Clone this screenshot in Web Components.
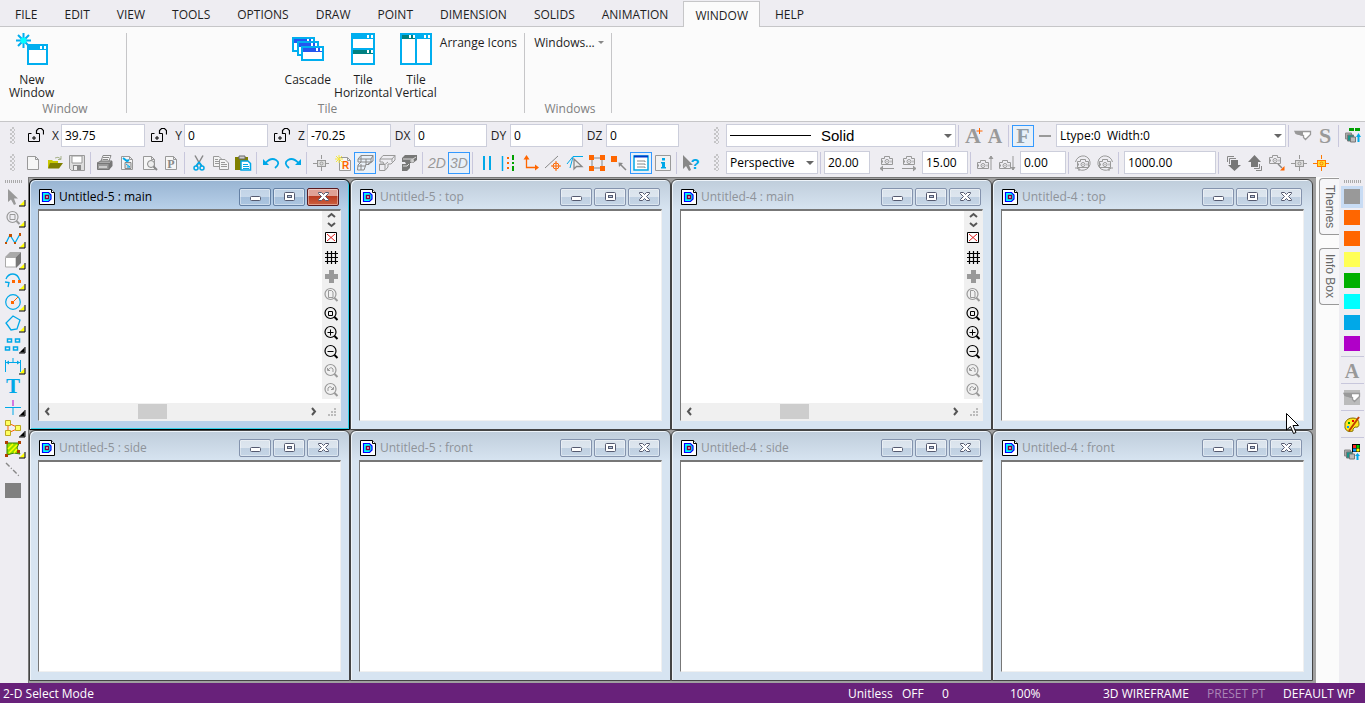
<!DOCTYPE html>
<html lang="en">
<head>
<meta charset="utf-8">
<title>Drafting workspace</title>
<style>
html, body {
    margin: 0;
    height: 100%;
}
body {
    font: 12px/16px "Open Sans", "Noto Sans", sans-serif;
    color: #1e1e1e;
    background: #eeedf2;
    overflow: hidden;
}
</style>
</head>
<body>
<app-shell>
    <menu-tabs slot="menu" items="FILE,EDIT,VIEW,TOOLS,OPTIONS,DRAW,POINT,DIMENSION,SOLIDS,ANIMATION,WINDOW,HELP" selected="WINDOW"></menu-tabs>

    <ribbon-group slot="ribbon" label="Window" style="--min: 126px">
        <ribbon-button icon="newWindow">New<br>Window</ribbon-button>
    </ribbon-group>
    <ribbon-group slot="ribbon" label="Tile" style="--min: 397px; --align: flex-end">
        <ribbon-button icon="cascade">Cascade</ribbon-button>
        <ribbon-button icon="tileH">Tile<br>Horizontal</ribbon-button>
        <ribbon-button icon="tileV">Tile<br>Vertical</ribbon-button>
        <ribbon-button>Arrange Icons</ribbon-button>
    </ribbon-group>
    <ribbon-group slot="ribbon" label="Windows" style="--min: 86px; --align: center">
        <ribbon-button drop>Windows...</ribbon-button>
    </ribbon-group>

    <tool-bar slot="bars">
        <value-field lock label="X" value="39.75"></value-field>
        <value-field lock label="Y" value="0"></value-field>
        <value-field lock label="Z" value="-70.25"></value-field>
        <value-field label="DX" value="0" style="--label: 23px; --field: 73px"></value-field>
        <value-field label="DY" value="0" style="--label: 23px; --field: 73px"></value-field>
        <value-field label="DZ" value="0" style="--label: 23px; --field: 73px"></value-field>
    </tool-bar>
    <tool-bar slot="bars">
        <pick-list line label="Line style" value="Solid" style="--field: 230px"></pick-list>
        <bar-sep></bar-sep>
        <tool-button icon="fontPlus" label="Increase text"></tool-button>
        <tool-button icon="fontA" label="Text"></tool-button>
        <bar-sep></bar-sep>
        <tool-button icon="fontF" label="Font" active></tool-button>
        <tool-button icon="dash" label="Line"></tool-button>
        <pick-list label="Line type" value="Ltype:0  Width:0" style="--field: 230px"></pick-list>
        <bar-sep></bar-sep>
        <tool-button icon="hand" label="Pick"></tool-button>
        <tool-button icon="fontS" label="Style"></tool-button>
        <bar-sep></bar-sep>
        <tool-button icon="layers" label="Layers"></tool-button>
    </tool-bar>
    <tool-bar slot="bars">
        <tool-button icon="page" label="New"></tool-button>
        <tool-button icon="open" label="Open"></tool-button>
        <tool-button icon="save" label="Save"></tool-button>
        <bar-sep></bar-sep>
        <tool-button icon="print" label="Print"></tool-button>
        <tool-button icon="pageSetup" label="Page setup"></tool-button>
        <tool-button icon="preview" label="Preview"></tool-button>
        <tool-button icon="pageP" label="Plot"></tool-button>
        <bar-sep></bar-sep>
        <tool-button icon="cut" label="Cut"></tool-button>
        <tool-button icon="copy" label="Copy"></tool-button>
        <tool-button icon="paste" label="Paste"></tool-button>
        <bar-sep></bar-sep>
        <tool-button icon="undo" label="Undo"></tool-button>
        <tool-button icon="redo" label="Redo"></tool-button>
        <bar-sep></bar-sep>
        <tool-button icon="target" label="Center"></tool-button>
        <tool-button icon="render" label="Render"></tool-button>
        <tool-button icon="wire" label="Wireframe" active></tool-button>
        <tool-button icon="hidden" label="Hidden line"></tool-button>
        <tool-button icon="shaded" label="Shaded"></tool-button>
        <bar-sep></bar-sep>
        <tool-button icon="mode2d" label="2D mode"></tool-button>
        <tool-button icon="mode3d" label="3D mode" active></tool-button>
        <bar-sep></bar-sep>
        <tool-button icon="parallel" label="Parallel"></tool-button>
        <tool-button icon="dashes" label="Line types"></tool-button>
        <tool-button icon="axes" label="Axes"></tool-button>
        <tool-button icon="snap" label="Snap"></tool-button>
        <tool-button icon="angle" label="Angle"></tool-button>
        <tool-button icon="nodes" label="Nodes"></tool-button>
        <tool-button icon="nodePick" label="Pick node"></tool-button>
        <tool-button icon="dialog" label="Dialog" active></tool-button>
        <tool-button icon="info" label="Info"></tool-button>
        <bar-sep></bar-sep>
        <tool-button icon="help" label="Help"></tool-button>
    </tool-bar>
    <tool-bar slot="bars">
        <pick-list label="Projection" value="Perspective" style="--field: 92px"></pick-list>
        <bar-sep></bar-sep>
        <value-field bare label="Pan step" value="20.00" style="--field: 46px"></value-field>
        <bar-sep blank></bar-sep>
        <tool-button icon="camLeft" label="Pan left"></tool-button>
        <tool-button icon="camRight" label="Pan right"></tool-button>
        <value-field bare gap label="Tilt step" value="15.00" style="--field: 46px"></value-field>
        <bar-sep></bar-sep>
        <tool-button icon="camUp" label="Raise"></tool-button>
        <tool-button icon="camDown" label="Lower"></tool-button>
        <value-field bare gap label="Twist" value="0.00" style="--field: 46px"></value-field>
        <bar-sep></bar-sep>
        <tool-button icon="camCw" label="Twist left"></tool-button>
        <tool-button icon="camCcw" label="Twist right"></tool-button>
        <bar-sep></bar-sep>
        <value-field bare gap label="Distance" value="1000.00" style="--field: 92px"></value-field>
        <bar-sep></bar-sep>
        <tool-button icon="stackDown" label="Send back"></tool-button>
        <tool-button icon="stackUp" label="Bring front"></tool-button>
        <tool-button icon="camAim" label="Aim"></tool-button>
        <tool-button icon="target" label="Center view"></tool-button>
        <tool-button icon="targetHot" label="Center camera"></tool-button>
    </tool-bar>

    <side-bar slot="left">
        <tool-button icon="arrow" label="Select" flyout="#ff0"></tool-button>
        <tool-button icon="zoomBox" label="Zoom" flyout="#ff0"></tool-button>
        <tool-button icon="polyline" label="Polyline" flyout="#ff0"></tool-button>
        <tool-button icon="box" label="Solid" flyout="#ff0"></tool-button>
        <tool-button icon="arc" label="Arc" flyout="#ff0"></tool-button>
        <tool-button icon="circle" label="Circle" flyout="#ff0"></tool-button>
        <tool-button icon="polygon" label="Polygon" flyout="#ff0"></tool-button>
        <tool-button icon="array" label="Array" flyout="#000"></tool-button>
        <tool-button icon="dimension" label="Dimension" flyout="#ff0"></tool-button>
        <tool-button icon="text" label="Text"></tool-button>
        <tool-button icon="point" label="Point" flyout="#000"></tool-button>
        <tool-button icon="links" label="Links" flyout="#000"></tool-button>
        <tool-button icon="hatch" label="Hatch" flyout="#ff0"></tool-button>
        <tool-button icon="dashLine" label="Line pattern"></tool-button>
        <tool-button icon="swatch" label="Fill" style="--swatch: #808080"></tool-button>
    </side-bar>

    <mdi-window caption="Untitled-5 : main" active tools></mdi-window>
    <mdi-window caption="Untitled-5 : top"></mdi-window>
    <mdi-window caption="Untitled-4 : main" tools></mdi-window>
    <mdi-window caption="Untitled-4 : top"></mdi-window>
    <mdi-window caption="Untitled-5 : side"></mdi-window>
    <mdi-window caption="Untitled-5 : front"></mdi-window>
    <mdi-window caption="Untitled-4 : side"></mdi-window>
    <mdi-window caption="Untitled-4 : front"></mdi-window>

    <dock-tab slot="dock">Themes</dock-tab>
    <dock-tab slot="dock">Info Box</dock-tab>

    <side-bar slot="right">
        <tool-button icon="swatch" label="Gray" chosen style="--swatch: #999"></tool-button>
        <tool-button icon="swatch" label="Orange" style="--swatch: #ff6600"></tool-button>
        <tool-button icon="swatch" label="Orange 2" style="--swatch: #ff6600"></tool-button>
        <tool-button icon="swatch" label="Yellow" style="--swatch: #ffff55"></tool-button>
        <tool-button icon="swatch" label="Green" style="--swatch: #00b000"></tool-button>
        <tool-button icon="swatch" label="Cyan" style="--swatch: #00ffff"></tool-button>
        <tool-button icon="swatch" label="Blue" style="--swatch: #00a8e8"></tool-button>
        <tool-button icon="swatch" label="Purple" style="--swatch: #b000c8"></tool-button>
        <bar-sep flat></bar-sep>
        <tool-button icon="fontA" label="Text color"></tool-button>
        <bar-sep flat></bar-sep>
        <tool-button icon="handBox" label="Pick color"></tool-button>
        <bar-sep flat></bar-sep>
        <tool-button icon="palette" label="Palette"></tool-button>
        <bar-sep flat></bar-sep>
        <tool-button icon="colorLayers" label="Color by layer"></tool-button>
    </side-bar>

    <status-bar slot="status">
        <span>2-D Select Mode</span>
        <span>Unitless</span>
        <span>OFF</span>
        <span>0</span>
        <span>100%</span>
        <span>3D WIREFRAME</span>
        <span style="color: #aa85b6">PRESET PT</span>
        <span>DEFAULT WP</span>
    </status-bar>
</app-shell>
<mouse-pointer></mouse-pointer>

<script>
const G = '#999';
const B = '#00a8e8';
const O = '#ff6600';

const glyph = (ch, color, size = 20) =>
    `<text x="8" y="15" text-anchor="middle" font-family="Liberation Serif, serif" font-weight="bold" font-size="${size}" fill="${color}">${ch}</text>`;
const pageShape = `<path d="M2.500 1.500H10.500L13.500 4.500V14.500H2.500ZM10.500 1.500V4.500H13.500" fill="#f6f6f6" stroke="${G}"/>`;
const camera = (x, y, c = G, f = 'none') =>
    `<g transform="translate(${x} ${y})" fill="${f}" stroke="${c}"><path d="M.5 2.500H3.500V.5H8.500V2.500H11.500V8.500H.5Z"/><circle cx="6" cy="5.500" r="2"/><path d="M5.500 5.500H6.500M1.500 4.500V6.500M10 4.500V6.500"/></g>`;
const cross = (c, f) =>
    `<path d="M0 8.500H16M8.500 0V4M8.500 12V16" stroke="${c}"/><rect x="4.500" y="5.500" width="8" height="6" fill="${f}" stroke="${c}"/><circle cx="8.500" cy="8.500" r="1.500" fill="none" stroke="${c}"/>`;
const lens = (c, inner) =>
    `<circle cx="7.500" cy="7" r="5.500" fill="none" stroke="${c}" stroke-width="1.200"/><path d="M11.500 11L14.500 14" stroke="${c}" stroke-width="2"/><g fill="none" stroke="${c}">${inner}</g>`;
const stack = (y) =>
    `<path d="M.5 ${y + 1}H6.500V${y + 7}H.5Z" fill="#aaa" stroke="#888"/><path d="M2.500 ${y + 3}H8.500V${y + 9}H2.500Z" fill="#17948a" stroke="#777"/><path d="M5.500 ${y + 5}H10.500V${y + 10}H5.500Z" fill="#bbb" stroke="#777"/>`;
const windowShape = (x, y, w, h, bar) =>
    `<path d="M${x} ${y}H${x + w}V${y + h}H${x}Z" fill="#fff" stroke="#00aeef" stroke-width="2"/><path d="M${x + 1} ${y + 1}H${x + w - 1}V${y + 5}H${x + 1}Z" fill="${bar}"/><path d="M${x + w - 7} ${y + 1}h2v3h-2zM${x + w - 3} ${y + 1}h2v3h-2z" fill="#fff"/>`;
const handShape = '<path d="M0 3.500H8L15.500 3.500V6.500L12.500 9.500 10.500 11.500 8.500 9.500V7.500L1 5.500Z" fill="#fff" stroke="#999" stroke-width="1.300"/><path d="M0 3H8V8L1 6Z" fill="#999"/>';

const icons = {
    page: pageShape,
    open: '<path d="M1 5H5L6 6H11V13H1Z" fill="#c8c800"/><path d="M3 8H16L12 13.500H1Z" fill="#7f7f00"/><path d="M8 3Q11 1 14 4M14 1V4.500H11" stroke="#a7b28c" fill="none"/>',
    save: `<path d="M.5.5H15.500V15.500H2.500L.5 13.500Z" fill="#ddd" stroke="${G}"/><path d="M3 1H13V8H3Z" fill="#fff" stroke="${G}"/><path d="M4 10H12V15H4Z" fill="#888"/><path d="M5 11H8V15H5Z" fill="#eee"/>`,
    print: '<path d="M4 6L6 .5H14L12 6" fill="#f4f4f4" stroke="#888"/><path d="M6 2.500H12M5.500 4.500H11" stroke="#888"/><path d="M0 8L4 6H15L12 9H1Z" fill="#aaa" stroke="#777"/><path d="M.5 8.500H12V14.500H.5Z" fill="#999" stroke="#777"/><path d="M12 9L15.500 6V11L12 15Z" fill="#777"/><path d="M2 12H10" stroke="#fff"/>',
    pageSetup: pageShape + `<path d="M4 3L8 6 10 5" stroke="${B}" stroke-width="2" fill="none"/><path d="M6 7.500H12V13.500H6Z" fill="#ddd" stroke="#888"/><path d="M7 9L11 12M8 12H11" stroke="${B}"/>`,
    preview: pageShape + '<circle cx="10" cy="9" r="3.500" fill="#eee" stroke="#888"/><path d="M12.500 11.500L16 15" stroke="#888" stroke-width="2"/>',
    pageP: pageShape + '<text x="8" y="13" text-anchor="middle" font-family="Liberation Serif, serif" font-weight="bold" font-size="12" fill="#888">P</text>',
    cut: `<path d="M4 .5L10 11M12 .5L6 11" stroke="#888" stroke-width="1.500"/><circle cx="5" cy="13" r="2" fill="none" stroke="${B}" stroke-width="1.500"/><circle cx="11" cy="13" r="2" fill="none" stroke="${B}" stroke-width="1.500"/><path d="M8 7L5 11M8 7L11 11" stroke="${B}" stroke-width="1.500"/>`,
    copy: `<path d="M.5 1.500H6L8.500 4V11.500H.5ZM2 4.500H5M2 6.500H7M2 8.500H7" fill="#f4f4f4" stroke="${G}"/><path d="M6.500 4.500H12L15.500 8V14.500H6.500ZM8 7.500H12M8 9.500H14M8 11.500H14" fill="#f4f4f4" stroke="${G}"/>`,
    paste: `<path d="M0 2H13V15H0Z" fill="#808000"/><path d="M4 1H10V4H4Z" fill="#ccc" stroke="#666"/><path d="M6 6H13L15.500 8.500V15H6Z" fill="#fff" stroke="${B}" stroke-width="1.500"/><path d="M8 9.500H13M8 11.500H14M8 13.500H14" stroke="${B}"/>`,
    undo: `<path d="M0 4V10H6Z" fill="${B}"/><path d="M2.500 8Q8 2 13 5T12 13" stroke="${B}" stroke-width="1.800" fill="none"/>`,
    redo: `<path d="M16 4V10H10Z" fill="${B}"/><path d="M13.500 8Q8 2 3 5T4 13" stroke="${B}" stroke-width="1.800" fill="none"/>`,
    target: cross(G, '#ddd'),
    targetHot: cross('#ff7a00', '#ffe030'),
    render: `<g transform="translate(2 1)">${pageShape}</g><text x="10.500" y="14" text-anchor="middle" font-family="Liberation Sans, sans-serif" font-weight="bold" font-size="10" fill="${O}">R</text><path d="M4 0V8M0 4H8M1 1L7 7M7 1L1 7" stroke="#f6e840"/>`,
    wire: '<path d="M1 4L4 .5H16L14 4V7L12 9.500H9L7 15H.5L1 10 4 7H1ZM1 4H14M4 .5V7M4 7H15M1 11H8M4 9V15M9 4V10M16 .5V6L11 9" fill="none" stroke="#888"/>',
    hidden: `<path d="M1 4L4 .5H16V5L12 9H9V12L6 15.500H.5V9H5L4 7H1ZM1 4H13L16 .5M13 4V7M.5 9.500H6L9 7M6 10V15" fill="none" stroke="${G}"/>`,
    shaded: '<path d="M1 3L4 0H16V5L12 8H9V13L6 16H1V9H5L4 7H1Z" fill="#777"/><path d="M2 4H12L15 2M12 4V7M2 11H6L8 9M10 5H12V7H10Z" fill="none" stroke="#ddd"/>',
    mode2d: '<text x="8" y="13" text-anchor="middle" font-family="Liberation Sans, sans-serif" font-style="italic" font-size="14" fill="#999">2D</text>',
    mode3d: '<text x="8" y="13" text-anchor="middle" font-family="Liberation Sans, sans-serif" font-style="italic" font-size="14" fill="#999">3D</text>',
    parallel: `<path d="M5 1V15M11 1V15" stroke="${B}" stroke-width="2"/>`,
    dashes: `<path d="M1.500 1V16" stroke="${B}" stroke-width="1.500"/><path d="M7 2V15" stroke="${O}" stroke-width="2" stroke-dasharray="2 3"/><path d="M12 0V16" stroke="#00a000" stroke-width="2" stroke-dasharray="5 2 2 2"/>`,
    axes: `<path d="M3.500 3V12.500H13" stroke="${O}" fill="none" stroke-width="1.300"/><path d="M.5 4.500L3.500 0 6.500 4.500ZM12 9.500L16 12.500 12 15.500Z" fill="${O}"/>`,
    snap: `<path d="M0 13L13 1" stroke="#888"/><circle cx="11" cy="11" r="3" fill="none" stroke="${O}"/><path d="M11 6V16M6 11H16" stroke="${O}"/>`,
    angle: `<path d="M0 9L6 1.500H16M6 2L3 13" stroke="${B}" fill="none"/><path d="M7 4V14L9.500 11.500 15 11.500Z" fill="#eee" stroke="#888" stroke-width="1.300"/>`,
    nodes: `<path d="M3 3H13V13H3Z" stroke="#888" fill="none"/><path d="M0 0h5v5h-5zM11 0h5v5h-5zM0 11h5v5h-5zM11 11h5v5h-5z" fill="${O}"/>`,
    nodePick: `<path d="M0 1h6v6h-6z" fill="${O}"/><path d="M9 9L15 15" stroke="#888" stroke-width="1.500"/><path d="M7.500 7.500L12 8 8 12Z" fill="#888"/>`,
    dialog: `<path d="M1 1H15V15H1Z" fill="#fff" stroke="${B}" stroke-width="1.500"/><path d="M1 1.500H15" stroke="#003cc8" stroke-width="2"/><path d="M4 6H12V7M4 9H12V10M4 12H12V13" stroke="#888"/>`,
    info: `<path d="M.5.5H15.500V15.500H.5Z" fill="#f2f2f2" stroke="${G}"/><path d="M7 3H10V5.500H7ZM6 7H10V12H11V13.500H6V12H7V8.500H6Z" fill="${B}"/>`,
    help: `<path d="M0 0V14L3 11 6 16 8 15 6 10H10Z" fill="#888"/><text x="12" y="14" text-anchor="middle" font-family="Liberation Sans, sans-serif" font-weight="bold" font-size="15" fill="${B}">?</text>`,
    lock: '<path d="M3.500 6.500H.5V14.500H11.500V6.500H9" stroke="#000"/><path d="M8.500 7V3.500L10.500 1.500H13.500L15.500 3.500V7.500" stroke="#000" stroke-width="1.200"/><path d="M6 9V13M4 11H8" stroke="#000"/>',
    fontPlus: glyph('A', G, 22) + `<path d="M14.500 0V6M11.500 3H17.500" stroke="${O}"/>`,
    fontA: glyph('A', G), fontF: glyph('F', '#8f9aa3', 22), fontS: glyph('S', G, 22),
    dash: `<path d="M2 8H14" stroke="${G}" stroke-width="2"/>`,
    hand: handShape,
    handBox: `<path d="M0 0H16V15H0Z" fill="#bbb"/>${handShape}`,
    layers: stack(4) + `<path d="M4 1.500H16" stroke="#00a000" stroke-width="3" stroke-dasharray="5 1"/><path d="M13.500 14V8" stroke="${B}" stroke-width="2"/><path d="M11 9L13.500 5 16 9Z" fill="${B}"/>`,
    colorLayers: stack(5) + `<path d="M8 0H16V8H8Z" fill="#000"/><path d="M9 1h3v3h-3z" fill="#f22"/><path d="M12.500 1h3v3h-3z" fill="#0c0"/><path d="M9 4.500h3v3h-3z" fill="#09f"/><path d="M12.500 4.500h3v3h-3z" fill="#ff0"/><path d="M13.500 16V11" stroke="${B}" stroke-width="2"/><path d="M11 12L13.500 9 16 12Z" fill="${B}"/>`,
    camLeft: camera(2, 1) + `<path d="M1 13.500H15M4 11L1 13.500 4 16" stroke="${G}" fill="${G}"/>`,
    camRight: camera(2, 1) + `<path d="M1 13.500H15M12 11L15 13.500 12 16" stroke="${G}" fill="${G}"/>`,
    camUp: camera(0, 5) + `<path d="M14 15V1M12 4L14 1 16 4" stroke="${G}" fill="${G}"/>`,
    camDown: camera(0, 5) + `<path d="M14 1V15M12 12L14 15 16 12" stroke="${G}" fill="${G}"/>`,
    camCw: camera(2, 4) + `<path d="M2 13Q6 17 12 14Q17 10 14 4Q10-1 4 2Q1 4 .5 7M0 13H4V16" stroke="${G}" fill="none"/>`,
    camCcw: camera(2, 4) + `<path d="M14 13Q10 17 4 14Q-1 10 2 4Q6-1 12 2Q15 4 15.500 7M16 13H12V16" stroke="${G}" fill="none"/>`,
    camAim: camera(0, 0) + `<path d="M9 9L13 13" stroke="#888" stroke-width="1.500"/><path d="M15.500 11V15.500H11Z" fill="${O}"/>`,
    stackDown: '<path d="M2.500 7V1.500H9M4.500 9V3.500H11" stroke="#888" fill="none"/><path d="M6 5H13V10H16L9.500 16 3 10H6Z" fill="#777"/>',
    stackUp: '<path d="M7 13.500H12.500V9M9 15.500H14.500V11" stroke="#888" fill="none"/><path d="M4 12V7H1L7.500 0 14 7H11V12Z" fill="#777"/>',
    arrow: '<path d="M3 0V13L6 10.500 9 16 11 15 9 9.500H13Z" fill="#999"/>',
    zoomBox: lens(G, '<path d="M5 4.500H10V9.500H5Z"/>'),
    polyline: `<path d="M1 12L5 4 10 12 15 3" stroke="${B}" stroke-width="1.300" fill="none"/><path d="M0 11h2v2h-2zM4 3h3v3h-3zM9 11h2v2h-2zM14 2h2v3h-2z" fill="#c05000"/>`,
    box: '<path d="M.5 5.500H11V15H.5Z" fill="#fff" stroke="#aaa"/><path d="M0 5L5 0H16L11 5Z" fill="#aaa"/><path d="M11 5L16 0V11L11 16Z" fill="#777"/>',
    arc: `<path d="M1 6Q3 1 8 1T15 8M0 9L4 9.500 3 14" stroke="${B}" fill="none" stroke-width="1.300"/><path d="M7 7h3v3h-3zM13 7h3v3h-3z" fill="${O}"/>`,
    circle: `<circle cx="8" cy="8" r="7.300" fill="none" stroke="${B}" stroke-width="1.200"/><path d="M8 8L13 3" stroke="${O}"/><path d="M6 7h3v3h-3z" fill="${O}"/>`,
    polygon: `<path d="M8 1L15 5 12 14 6 15 1 8Z" fill="none" stroke="${B}" stroke-width="1.300"/>`,
    array: `<path d="M2.500 3H6.500V6H2.500ZM10.500 3H14.500V6H10.500ZM.5 11H4.500V14H.5ZM8.500 11H12.500V14H8.500Z" stroke="${B}" stroke-width="1.500" fill="none"/>`,
    dimension: `<path d="M.5 3V15M15.500 3V15M1 5.500H15M8 1V6" stroke="${B}" fill="none"/><path d="M1 5.500L4 3.500V7.500ZM15 5.500L12 3.500V7.500Z" fill="${B}"/>`,
    text: glyph('T', B, 21),
    point: `<path d="M8 9V16M0 8.500H16" stroke="${B}"/><path d="M8 1V7" stroke="#cc50d8" stroke-width="1.500"/>`,
    links: `<path d="M3 3V13L14 8Z" stroke="${O}" fill="none"/><path d="M.5.5H5.500V5.500H.5ZM.5 10.500H5.500V15.500H.5ZM10.500 5.500H15.500V10.500H10.500Z" fill="#ffff60" stroke="#bca820"/>`,
    hatch: '<path d="M2 2H14L12 7 15 13 9 12 2 14Z" fill="#8fe000" stroke="#398000"/><path d="M3 8L8 3M4 12L12 4M9 12L12 8" stroke="#ff0" stroke-width="1.500"/><path d="M0 0h3v3h-3zM13 0h3v3h-3zM0 13h3v3h-3zM12 9h3v3h-3z" fill="#b04000"/>',
    dashLine: '<path d="M1 1L15 15" stroke="#888" stroke-width="1.400" stroke-dasharray="5 2 1 2"/>',
    swatch: '<path d="M0 0H16V15H0Z" style="fill: var(--swatch, #888)"/>',
    palette: '<path d="M1 6Q3 1 9 1T15 7Q15 11 11 10Q8 12 9 14Q3 16 1 11Z" fill="#ffe820" stroke="#887000"/><path d="M4 5h2v2h-2z" fill="#00a000"/><path d="M8 3h2v2h-2z" fill="#e00"/><path d="M3 9h2v2h-2z" fill="#09f"/><path d="M15 0L5 14" stroke="#c04000" stroke-width="2"/>',
    vClose: '<path d="M2.500 2.500H13.500V12.500H2.500Z" fill="#fff" stroke="#000"/><path d="M4 4L12 11M12 4L4 11" stroke="#e02020"/>',
    vGrid: '<path d="M2 4.500H15M2 8.500H15M2 12.500H15M4.500 2V15M8.500 2V15M12.500 2V15" stroke="#000" stroke-width="1.200"/>',
    vPlus: '<path d="M6 2H11V6H15V11H11V15H6V11H2V6H6Z" fill="#999"/>',
    vPage: lens(G, '<path d="M5.500 3.500H8.500L10 5V10.500H5.500Z"/>'),
    vBox: lens('#000', '<path d="M5.500 5.500H9.500V9.500H5.500Z"/>'),
    vIn: lens('#000', '<path d="M4.500 7.500H10.500M7.500 4.500V10.500"/>'),
    vOut: lens('#000', '<path d="M4.500 7.500H10.500"/>'),
    vPrev: lens(G, '<path d="M4.500 5V7.500H7M5 7Q8 3 10 6V9"/>'),
    vNext: lens(G, '<path d="M10.500 5V7.500H8M10 7Q7 3 5 6V9"/>'),
    minimize: '<rect x="3.500" y="7.500" width="10" height="4" rx="1" fill="#fff" stroke="#555a70"/>',
    restore: '<rect x="3.500" y="3.500" width="10" height="8" rx="1" fill="#fff" stroke="#555a70"/><rect x="6.500" y="6.500" width="4" height="2" fill="#b8c8dc" stroke="#555a70"/>',
    close: '<path d="M3.500 3.500H6.500L8.500 5.500 10.500 3.500H13.500V4.500L10.500 7.500 13.500 10.500V11.500H10.500L8.500 9.500 6.500 11.500H3.500V10.500L6.500 7.500 3.500 4.500Z" fill="#fff" stroke="#555a70"/>',
    document: '<path d="M.5.5H12.500L15.500 3.500V15.500H.5Z" fill="#fff" stroke="#000"/><path d="M12.500.5V3.500H15.500" fill="#fff" stroke="#000"/><path d="M3.500 3.500H9.500L12 6V10L9.500 12.500H3.500Z" fill="#0ff" stroke="#00f" stroke-width="1.200"/><path d="M6.500 6.500H9.500V9.500H6.500Z" fill="#fff" stroke="#800040" stroke-width="1.500"/>'
};

const bigIcons = {
    newWindow: windowShape(12, 12, 19, 19, '#00aeef') + '<path d="M7.500 0V15M0 7.500H15M2 2L13 13M13 2L2 13" stroke="#00aeef" stroke-width="2"/><circle cx="7.500" cy="7.500" r="3" fill="#0ff"/>',
    cascade: windowShape(1, 5, 21, 13, '#2456f0') + windowShape(6, 9, 20, 13, '#2456f0') + windowShape(10, 14, 21, 13, '#2456f0'),
    tileH: windowShape(5, 1, 22, 15, '#00aeef') + windowShape(5, 16, 22, 15, '#008080'),
    tileV: windowShape(1, 1, 15, 30, '#008080') + windowShape(16, 1, 15, 30, '#00aeef')
};

const svg = (name, size = 16) => `<svg width="${size}" height="${size}" viewBox="0 0 ${size} ${size}" fill="none" aria-hidden="true">${icons[name] || bigIcons[name]}</svg>`;

class BaseElement extends HTMLElement {
    constructor() {
        super();
        this.attachShadow({ mode: 'open' });
    }
    connectedCallback() {
        this.shadowRoot.innerHTML = this.render();
    }
}

class AppShell extends BaseElement {
    render() {
        return `
<style>
:host {
    display: grid;
    grid-template-rows: 27px 95px 55px 1fr 20px;
    height: 100vh;
}
.ribbon {
    display: flex;
    background: #fbfbfb;
    border-bottom: 1px solid #c6c6c8;
}
.bars {
    display: grid;
    grid-template-columns: max-content 1fr;
    grid-auto-rows: 27px;
    column-gap: 2px;
}
.work {
    display: grid;
    grid-template-columns: 28px 1fr 23px 26px;
    min-height: 0;
}
.desktop {
    display: grid;
    grid-template: repeat(2, 1fr) / repeat(4, 1fr);
    padding: 1px 3px 2px 0;
    border-left: 1px solid #777;
    border-top: 1px solid #777;
    background: #a0a0a0;
}
.dock {
    display: flex;
    flex-direction: column;
    gap: 13px;
    padding: 1px 0 0 3px;
    background: #fbfbfb;
}
</style>
<slot name="menu"></slot>
<div class="ribbon"><slot name="ribbon"></slot></div>
<div class="bars"><slot name="bars"></slot></div>
<div class="work">
    <slot name="left"></slot>
    <main class="desktop"><slot></slot></main>
    <div class="dock"><slot name="dock"></slot></div>
    <slot name="right"></slot>
</div>
<slot name="status"></slot>`;
    }
}

class MenuTabs extends BaseElement {
    render() {
        const selected = this.getAttribute('selected');
        const tabs = this.getAttribute('items').split(',').map(name =>
            `<button role="tab" aria-selected="${name === selected}">${name}</button>`).join('');
        return `
<style>
nav {
    display: flex;
    gap: 3px;
    height: 26px;
    padding: 0 3px;
    border-bottom: 1px solid #c6c6c8;
}
button {
    font: inherit;
    color: inherit;
    margin: 1px 0 0;
    padding: 2px 11px 0;
    height: 25px;
    border: 1px solid transparent;
    border-bottom: 0;
    background: none;
}
button[aria-selected=true] {
    height: 26px;
    background: #fbfbfb;
    border-color: #c6c6c8;
}
</style>
<nav role="tablist">${tabs}</nav>`;
    }
}

class RibbonGroup extends BaseElement {
    render() {
        return `
<style>
:host {
    display: flex;
    flex-direction: column;
    min-width: var(--min);
    margin: 6px 0 8px;
    border-right: 1px solid #c6c6c8;
}
.items {
    display: flex;
    flex: 1;
    justify-content: var(--align, flex-start);
    padding: 0 7px 0 9px;
    gap: 3px;
}
.label {
    padding-left: 4px;
    text-align: center;
    line-height: 8px;
    color: #808080;
}
</style>
<div class="items"><slot></slot></div>
<div class="label">${this.getAttribute('label')}</div>`;
    }
}

class RibbonButton extends BaseElement {
    render() {
        const icon = this.getAttribute('icon');
        return `
<style>
button {
    display: flex;
    flex-direction: column;
    align-items: center;
    gap: 8px;
    padding: 0;
    border: 0;
    background: none;
    font: inherit;
    line-height: 13px;
    color: inherit;
    white-space: nowrap;
}
button.plain {
    flex-direction: row;
    align-items: center;
    gap: 3px;
    padding: 3px 0;
}
i {
    border: 3px solid transparent;
    border-top-color: #888;
    border-bottom: 0;
}
</style>
<button class="${icon ? '' : 'plain'}">${icon ? svg(icon, 32) : ''}<span><slot></slot></span>${this.hasAttribute('drop') ? '<i></i>' : ''}</button>`;
    }
}

class ToolBar extends BaseElement {
    render() {
        return `
<style>
:host {
    display: flex;
    align-items: center;
}
.grip {
    width: 5px;
    height: 17px;
    margin: 0 7px 0 10px;
    background: conic-gradient(#aaa 25%, transparent 0 50%, #aaa 0 75%, transparent 0) 0 0 / 4px 4px;
    opacity: 0.6;
}
</style>
<div class="grip"></div><slot></slot>`;
    }
}

class BarSep extends BaseElement {
    render() {
        return `
<style>
:host {
    display: block;
    width: 1px;
    height: 22px;
    margin: 0 3px 0 2px;
    background: #c8c7dc;
}
:host([blank]) {
    background: none;
}
:host([flat]) {
    width: 23px;
    height: 1px;
    margin: 2px 0 3px;
}
</style>`;
    }
}

class ToolButton extends BaseElement {
    render() {
        const flyout = this.getAttribute('flyout');
        const marker = flyout ? `<svg class="flyout" width="7" height="7" viewBox="0 0 7 7"><path d="M5.500.5V5.500H.5Z" fill="${flyout}"/><path d="M6 0V6H0" fill="none" stroke="#000"/></svg>` : '';
        return `
<style>
:host {
    display: block;
    position: relative;
}
button {
    display: flex;
    align-items: center;
    justify-content: center;
    box-sizing: border-box;
    width: 22px;
    height: 22px;
    padding: 0;
    border: 1px solid transparent;
    background: none;
}
:host([slim]) button {
    width: 18px;
    height: 19px;
}
:host([active]) button {
    border-color: #3399ff;
    background: #e8f0f8;
}
:host([chosen]) button {
    background: #c8dcf4;
}
svg {
    display: block;
    flex: none;
    overflow: visible;
}
.flyout {
    position: absolute;
    right: -2px;
    bottom: 0;
}
</style>
<button aria-label="${this.getAttribute('label')}">${svg(this.getAttribute('icon'))}${marker}</button>`;
    }
}

class ValueField extends BaseElement {
    render() {
        const label = this.getAttribute('label');
        const bare = this.hasAttribute('bare');
        return `
<style>
:host {
    display: flex;
    align-items: center;
}
:host([gap]) {
    margin-left: 2px;
}
button {
    width: 28px;
    height: 18px;
    padding: 0;
    border: 0;
    background: none;
}
label {
    width: var(--label, 11px);
    text-align: center;
}
input {
    box-sizing: border-box;
    width: var(--field, 84px);
    height: 23px;
    padding: 0 3px;
    border: 1px solid #cccedb;
    background: #fff;
    font: inherit;
    color: #000;
}
</style>
${this.hasAttribute('lock') ? `<button aria-label="Lock ${label}">${svg('lock')}</button>` : ''}
${bare ? '' : `<label for="field">${label}</label>`}
<input id="field" value="${this.getAttribute('value')}" ${bare ? `aria-label="${label}"` : ''}>`;
    }
}

class PickList extends BaseElement {
    render() {
        return `
<style>
:host {
    display: block;
    position: relative;
}
select {
    appearance: none;
    display: block;
    box-sizing: border-box;
    width: var(--field);
    height: 23px;
    padding: 0 18px 0 3px;
    border: 1px solid #cccedb;
    border-radius: 0;
    background: #fff;
    font: inherit;
    color: #000;
    white-space: pre;
}
:host([line]) select {
    padding-left: 94px;
    font: 15px "Liberation Sans", sans-serif;
    background: linear-gradient(#000, #000) 3px 50% / 81px 1px no-repeat #fff;
}
i {
    position: absolute;
    right: 4px;
    top: 10px;
    border: 4px solid transparent;
    border-top-color: #666;
    border-bottom: 0;
    pointer-events: none;
}
</style>
<select aria-label="${this.getAttribute('label')}"><option>${this.getAttribute('value').replace(/ {2}/g, '&nbsp; ')}</option></select><i></i>`;
    }
}

class SideBar extends BaseElement {
    render() {
        return `
<style>
:host {
    display: flex;
    flex-direction: column;
    align-items: center;
    padding-right: 2px;
}
:host([slot=right]) {
    padding: 0;
}
.grip {
    width: 17px;
    height: 3px;
    margin: 3px 0;
    background: repeating-linear-gradient(90deg, #aaa 0 1px, transparent 1px 2px);
}
::slotted(tool-button) {
    height: 21px;
}
</style>
<div class="grip"></div><slot></slot>`;
    }
}

class MdiWindow extends BaseElement {
    render() {
        const tools = ['vClose', 'vGrid', 'vPlus', 'vPage', 'vBox', 'vIn', 'vOut', 'vPrev', 'vNext'];
        const chevron = d => `<svg width="9" height="9" viewBox="0 0 9 9" fill="none" stroke="#555" stroke-width="2"><path d="${d}"/></svg>`;
        const view = `
    <div class="strip">
        <div class="spin"><button aria-label="Scroll up">${chevron('M1 6L4.500 3 8 6')}</button><button aria-label="Scroll down">${chevron('M1 3L4.500 6 8 3')}</button></div>
        ${tools.map(name => `<tool-button slim icon="${name}" label="${name.slice(1)}"></tool-button>`).join('')}
    </div>
    <div class="scroll">
        <button aria-label="Scroll left">${chevron('M6 1L3 4.500 6 8')}</button>
        <div class="track"><div class="thumb"></div></div>
        <button aria-label="Scroll right">${chevron('M3 1L6 4.500 3 8')}</button>
        <svg class="size" width="18" height="16" viewBox="0 0 18 16"><path d="M12 5h2v2h-2zM9 8h2v2h-2zM12 8h2v2h-2zM6 11h2v2h-2zM9 11h2v2h-2zM12 11h2v2h-2z" fill="#bbb"/></svg>
    </div>`;
        return `
<style>
:host {
    --frame: #d7e4f1;
    --top: #bfcddb;
    --edge: #8493ad;
    display: flex;
    flex-direction: column;
    box-sizing: border-box;
    min-width: 0;
    min-height: 0;
    padding: 0 8px 8px;
    border: 1px solid #444;
    border-radius: 6px 6px 0 0;
    background: linear-gradient(var(--top), var(--frame) 30px);
    box-shadow: inset 1px 1px #eef4fa;
}
:host([active]) {
    --frame: #b9d1ea;
    --top: #98b4d2;
    --edge: #6480a4;
    border-color: #000;
    box-shadow: inset 1px 1px #dbe8f5, inset -1px -1px #30d0e8;
}
header {
    display: flex;
    align-items: center;
    gap: 2px;
    flex: none;
    box-sizing: border-box;
    height: 29px;
    padding: 4px 2px 0 1px;
}
h2 {
    flex: 1;
    margin: 0 0 0 2px;
    font: inherit;
    color: #8e9399;
}
:host([active]) h2 {
    color: #000;
}
header svg {
    flex: none;
    display: block;
}
header button {
    display: flex;
    justify-content: center;
    align-items: center;
    box-sizing: border-box;
    width: 32px;
    height: 18px;
    padding: 0;
    border: 1px solid var(--edge);
    border-radius: 2px;
    background: linear-gradient(#ffffff55 50%, #8ca8c833 50%);
    box-shadow: inset 0 0 0 1px #ffffff66;
}
:host([active]) header button:last-child {
    border-color: #5a1a20;
    background: linear-gradient(#dfa196 45%, #b93a20 45%, #cc6040);
}
.client {
    display: grid;
    grid-template: 1fr 17px / 1fr 18px;
    flex: 1;
    min-height: 0;
    border: 1px solid #f0f0f0;
    border-top: 2px solid #777;
    border-left: 1px solid #777;
    background: #fff;
}
.strip {
    grid-area: 1 / 2;
    justify-self: end;
    align-self: start;
    width: 18px;
    background: #f0f0f0;
}
.spin {
    display: flex;
    flex-direction: column;
    align-items: center;
    height: 17px;
}
.spin button, .scroll button {
    display: flex;
    align-items: center;
    justify-content: center;
    padding: 0;
    border: 0;
    background: none;
}
.scroll {
    grid-area: 2 / 1 / 3 / 3;
    display: flex;
    background: #f0f0f0;
}
.scroll button {
    width: 17px;
}
.track {
    flex: 1;
}
.thumb {
    width: 29px;
    height: 15px;
    margin: 1px 33%;
    background: #cdcdcd;
}
</style>
<header>
    ${svg('document')}
    <h2>${this.getAttribute('caption')}</h2>
    <button aria-label="Minimize">${svg('minimize')}</button>
    <button aria-label="Restore">${svg('restore')}</button>
    <button aria-label="Close">${svg('close')}</button>
</header>
<div class="client">${this.hasAttribute('tools') ? view : ''}</div>`;
    }
}

class DockTab extends BaseElement {
    render() {
        return `
<style>
:host {
    display: block;
}
button {
    display: flex;
    align-items: center;
    justify-content: center;
    width: 20px;
    height: 57px;
    padding: 0;
    border: 1px solid #999;
    border-right: 0;
    border-radius: 4px 0 0 4px;
    background: #f6f6f8;
    font: 12px "Liberation Sans", sans-serif;
    color: #666;
}
span {
    writing-mode: vertical-rl;
}
</style>
<button><span><slot></slot></span></button>`;
    }
}

class StatusBar extends BaseElement {
    render() {
        return `
<style>
:host {
    display: grid;
    grid-template-columns: 1fr 54px 40px 68px 93px 104px 76px 82px;
    align-items: center;
    padding: 1px 0 0 3px;
    background: #68217a;
    color: #fff;
    white-space: nowrap;
}
</style>
<slot></slot>`;
    }
}

class MousePointer extends BaseElement {
    render() {
        return `
<style>
:host {
    position: absolute;
    left: 1286px;
    top: 413px;
    pointer-events: none;
}
</style>
<svg width="13" height="21" viewBox="0 0 13 21"><path d="M.5.5V17L4.500 13.500 7.500 20.500 10 19.500 7 12.500H12.500Z" fill="#fff" stroke="#000"/></svg>`;
    }
}

customElements.define('app-shell', AppShell);
customElements.define('menu-tabs', MenuTabs);
customElements.define('ribbon-group', RibbonGroup);
customElements.define('ribbon-button', RibbonButton);
customElements.define('tool-bar', ToolBar);
customElements.define('bar-sep', BarSep);
customElements.define('tool-button', ToolButton);
customElements.define('value-field', ValueField);
customElements.define('pick-list', PickList);
customElements.define('side-bar', SideBar);
customElements.define('mdi-window', MdiWindow);
customElements.define('dock-tab', DockTab);
customElements.define('status-bar', StatusBar);
customElements.define('mouse-pointer', MousePointer);
</script>
</body>
</html>
